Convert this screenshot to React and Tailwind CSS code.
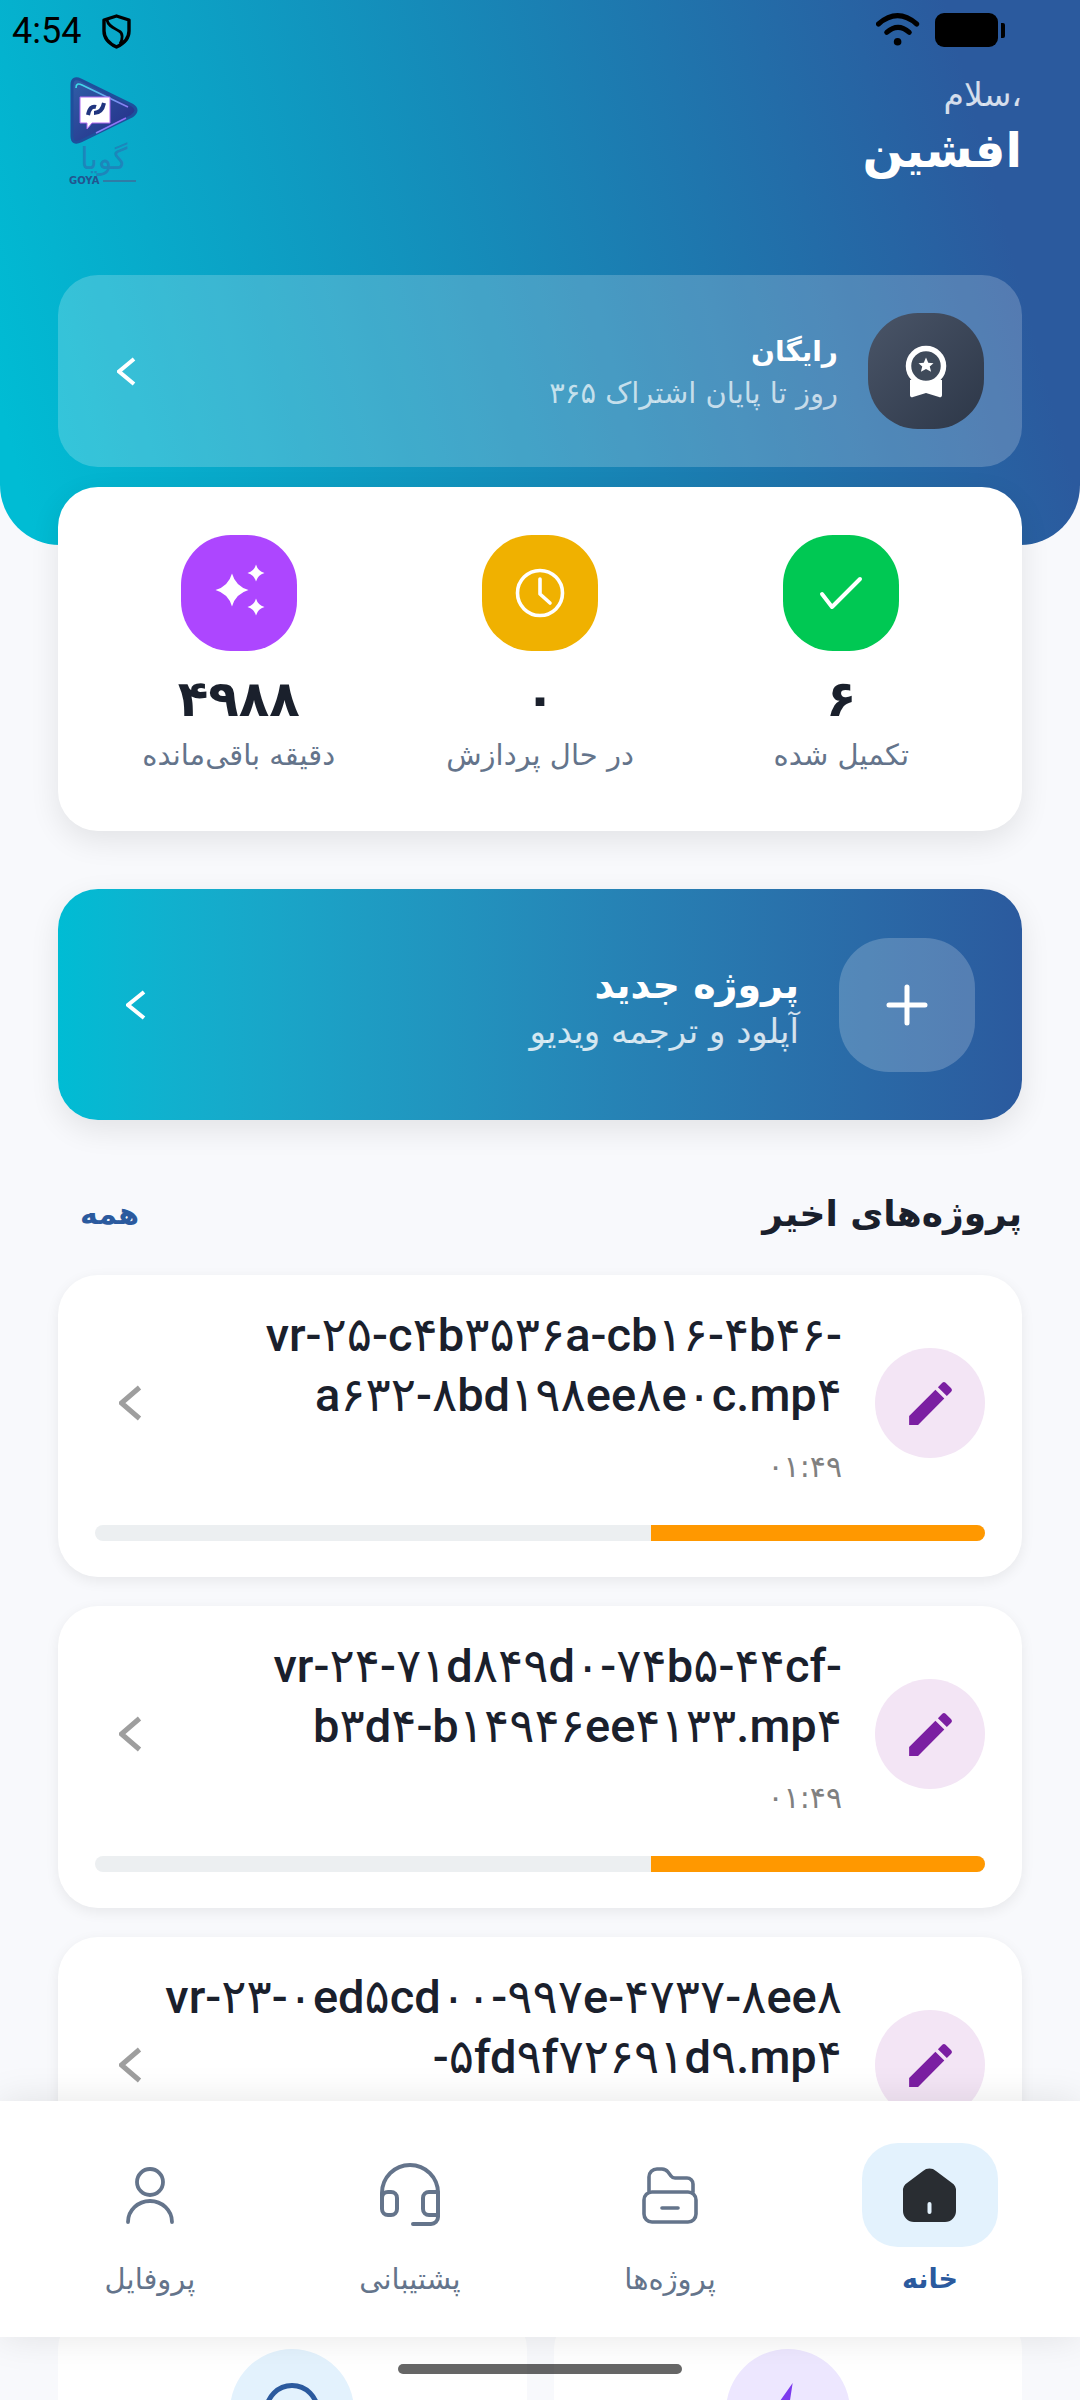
import React from 'react';
import { MdEdit } from 'react-icons/md';

const projects = [
  { lines: ['vr-۲۵-c۴b۳۵۳۶a-cb۱۶-۴b۴۶-', 'a۶۳۲-۸bd۱۹۸ee۸e۰c.mp۴'] },
  { lines: ['vr-۲۴-۷۱d۸۴۹d۰-۷۴b۵-۴۴cf-', 'b۳d۴-b۱۴۹۴۶ee۴۱۳۳.mp۴'] },
  { lines: ['vr-۲۳-۰ed۵cd۰۰-۹۹۷e-۴۷۳۷-۸ee۸', '-۵fd۹f۷۲۶۹۱d۹.mp۴'] },
];

function Chevron({ w, h, stroke, color }) {
  return (
    <svg width={w} height={h} viewBox={`0 0 ${w} ${h}`} fill="none" className="shrink-0">
      <path d={`M${w - stroke / 2} ${stroke / 2} L${stroke / 2} ${h / 2} L${w - stroke / 2} ${h - stroke / 2}`} stroke={color} strokeWidth={stroke} />
    </svg>
  );
}

function star(cx, cy, r) {
  const k = r * 0.22;
  return `M${cx} ${cy - r} Q${cx + k} ${cy - k} ${cx + r} ${cy} Q${cx + k} ${cy + k} ${cx} ${cy + r} Q${cx - k} ${cy + k} ${cx - r} ${cy} Q${cx - k} ${cy - k} ${cx} ${cy - r}Z`;
}

function Logo() {
  return (
    <div dir="ltr">
      <svg width="76" height="114" viewBox="0 0 76 114">
        <defs>
          <linearGradient id="logoBody" x1="0" y1="0" x2="1" y2="1">
            <stop offset="0" stopColor="#2f5fa8" />
            <stop offset="1" stopColor="#252a86" />
          </linearGradient>
          <linearGradient id="logoEdge" x1="0" y1="0" x2="1" y2="1">
            <stop offset="0" stopColor="#38e0e8" />
            <stop offset="1" stopColor="#a855f7" />
          </linearGradient>
        </defs>
        <path d="M6 10 Q6 1 15 5 L66 30 Q74 35 66 41 L15 66 Q6 70 6 61Z" fill="url(#logoBody)" stroke="#1e4f9c" strokeWidth="3" />
        <path d="M10 13 Q10 7 16 10 L62 32 M60 43 L30 58" fill="none" stroke="url(#logoEdge)" strokeWidth="1.6" />
        <path d="M14 22 H44 V48 H26 L21 54 V48 H14Z" fill="#ffffff" stroke="#b06bf0" strokeWidth="1" />
        <path d="M22 40 Q24 30 30 32 M38 28 Q36 38 28 38" fill="none" stroke="#20357f" strokeWidth="4" />
        <text x="38" y="94" textAnchor="middle" fontSize="30" fill="#1d86ba" fontFamily="DejaVu Sans">گویا</text>
        <text x="3" y="109" fontSize="10" fontWeight="700" fill="#22558f" fontFamily="DejaVu Sans">GOYA</text>
        <rect x="37" y="105" width="33" height="2" fill="#2f7ca6" />
      </svg>
    </div>
  );
}

function ProjectRow({ lines }) {
  return (
    <div className="bg-white rounded-[40px] shadow-[0_4px_14px_rgba(0,0,0,0.07)] px-[37px] pt-[30px] pb-[36px] mb-[29px] shrink-0">
      <div className="h-[196px] flex items-center">
        <div className="w-[110px] h-[110px] rounded-full bg-[#f3e5f5] flex items-center justify-center shrink-0">
          <MdEdit size={57} color="#7b1fa2" />
        </div>
        <div className="flex-1 h-full mr-[33px]">
          <div className="text-[47px] leading-[60px] font-medium text-[#1a202c] font-['Roboto','DejaVu_Sans',sans-serif]">
            {lines.map((l) => (
              <span key={l} dir="ltr" className="block text-right whitespace-nowrap">{l}</span>
            ))}
          </div>
          <div className="mt-[24px] text-[30px] leading-[36px] text-[#808080]">۰۱:۴۹</div>
        </div>
        <div className="ml-[24px] mr-[16px]">
          <Chevron w={23} h={36} stroke={5} color="#9e9e9e" />
        </div>
      </div>
      <div className="mt-[24px] h-[16px] rounded-full bg-[#eceff1] overflow-hidden">
        <div className="h-full bg-[#ff9800]" style={{ width: `${(334 / 890) * 100}%` }} />
      </div>
    </div>
  );
}

function NavItem({ label, active, children }) {
  return (
    <div className="flex-1 flex flex-col items-center">
      <div className={`w-[136px] h-[104px] rounded-[36px] flex items-center justify-center ${active ? 'bg-[#e3f2fd]' : ''}`}>
        {children}
      </div>
      <div className={`mt-[14px] leading-[36px] ${active ? 'text-[27px] font-bold text-[#2b5a9e]' : 'text-[29px] text-[#64748b]'}`}>{label}</div>
    </div>
  );
}

function App() {
  return (
    <div dir="rtl" className="relative w-[1080px] h-[2400px] overflow-hidden bg-[#f8f9fc] font-['DejaVu_Sans',sans-serif]">
      {/* هدر */}
      <header className="h-[545px] rounded-b-[60px] bg-linear-[75deg,#00bcd4_3%,#2b5a9e_89%] px-[58px]">
        <div dir="ltr" className="h-[60px] -mx-[58px] pl-[12px] flex items-center">
          <span className="text-[36px] text-black font-['Roboto',sans-serif] mt-[1px]">4:54</span>
          <svg width="29" height="35" viewBox="0 0 29 35" fill="none" className="ml-[21px] mt-[2px]">
            <path d="M14.5 2 L27 6 V17 C27 25 21 30 14.5 33 C8 30 2 25 2 17 V6Z" stroke="#000" strokeWidth="3.4" strokeLinejoin="round" />
            <path d="M5 6 C6 12 12 14 17 17 C21 19 21 25 18 30" stroke="#000" strokeWidth="2.8" />
          </svg>
          <div className="ml-auto mr-[75px] flex items-center">
            <svg width="44" height="34" viewBox="0 0 44 34" fill="none" className="mr-[15px]">
              <path d="M2.5 11 Q21.5 -5.6 40.7 11" stroke="#000" strokeWidth="5" strokeLinecap="round" />
              <path d="M10.7 19.3 Q22 9.3 33.3 19.3" stroke="#000" strokeWidth="5" strokeLinecap="round" />
              <circle cx="21.6" cy="28.7" r="3.8" fill="#000" />
            </svg>
            <div className="w-[63px] h-[34px] rounded-[9px] bg-black" />
            <div className="w-[4px] h-[15px] ml-[3px] bg-black rounded-r-[2px]" />
          </div>
        </div>
        <div className="flex items-start justify-between mt-[15px] h-[200px]">
          <div className="text-white">
            <div className="text-[33px] leading-[40px] text-white/80">،سلام</div>
            <div className="text-[48px] leading-[64px] font-bold mt-[3px]">افشین</div>
          </div>
          <div className="ml-[8px]"><Logo /></div>
        </div>
        <div className="h-[192px] rounded-[40px] bg-white/20 flex items-center pr-[38px] pl-[59px]">
          <div className="w-[116px] h-[116px] rounded-[50px] bg-linear-to-br from-[#4a5568] to-[#2d3748] flex items-center justify-center shrink-0">
            <svg width="60" height="66" viewBox="0 0 60 66">
              <path d="M14 42 V57 a2 2 0 0 0 3 2 L30 55 L43 59 a2 2 0 0 0 3 -2 V42Z" fill="#fff" />
              <circle cx="30" cy="28" r="17.5" fill="#3f4a5a" stroke="#fff" strokeWidth="5.5" />
              <path d="M30 16 L33 23 L40 23.5 L35 28 L36.8 35 L30 31.2 L23.2 35 L25 28 L20 23.5 L27 23Z" fill="#fff" transform="translate(7.5 7.5) scale(.75)" />
            </svg>
          </div>
          <div className="flex-1 mr-[30px]">
            <div className="text-[28px] leading-[42px] font-bold text-white">رایگان</div>
            <div className="text-[29px] leading-[36px] text-white/70 mt-[2px]">روز تا پایان اشتراک ۳۶۵</div>
          </div>
          <Chevron w={19} h={29} stroke={4} color="#ffffff" />
        </div>
      </header>

      <main className="px-[58px]">
        {/* آمار */}
        <div className="relative -mt-[58px] h-[344px] bg-white rounded-[40px] shadow-[0_10px_30px_rgba(0,0,0,0.09)] px-[30px] pt-[48px] grid grid-cols-3">
          <div className="flex flex-col items-center">
            <div className="w-[116px] h-[116px] rounded-[50px] bg-[#00c853] flex items-center justify-center">
              <svg width="46" height="38" viewBox="0 0 46 38" fill="none">
                <path d="M4 20 L14 33 L42 5" stroke="#fff" strokeWidth="4" strokeLinecap="round" strokeLinejoin="round" />
              </svg>
            </div>
            <div className="mt-[18px] text-[50px] leading-[60px] font-bold text-[#1a202c]">۶</div>
            <div className="mt-[8px] text-[29px] leading-[36px] text-[#64748b]">تکمیل شده</div>
          </div>
          <div className="flex flex-col items-center">
            <div className="w-[116px] h-[116px] rounded-[50px] bg-[#f0b100] flex items-center justify-center">
              <svg width="52" height="52" viewBox="0 0 52 52" fill="none" stroke="#fff" strokeWidth="3.6" strokeLinecap="round" strokeLinejoin="round">
                <circle cx="26" cy="26" r="22.5" />
                <path d="M26 12 V27 L36 36" />
              </svg>
            </div>
            <div className="mt-[18px] text-[50px] leading-[60px] font-bold text-[#1a202c]">۰</div>
            <div className="mt-[8px] text-[29px] leading-[36px] text-[#64748b]">در حال پردازش</div>
          </div>
          <div className="flex flex-col items-center">
            <div className="w-[116px] h-[116px] rounded-[50px] bg-[#ad46ff] flex items-center justify-center">
              <svg width="60" height="60" viewBox="0 0 60 60" fill="#fff">
                <path d={star(23, 27, 16.5)} />
                <path d={star(47, 10, 8.5)} />
                <path d={star(47, 44, 8.5)} />
              </svg>
            </div>
            <div className="mt-[18px] text-[50px] leading-[60px] font-bold text-[#1a202c]">۴۹۸۸</div>
            <div className="mt-[8px] text-[29px] leading-[36px] text-[#64748b]">دقیقه باقی‌مانده</div>
          </div>
        </div>

        {/* پروژه جدید */}
        <div className="mt-[58px] h-[231px] rounded-[40px] bg-linear-to-l from-[#2b5a9e] to-[#00bcd4] shadow-[0_10px_30px_rgba(0,0,0,0.09)] flex items-center pr-[47px] pl-[68px]">
          <div className="w-[136px] h-[134px] rounded-[50px] bg-white/20 flex items-center justify-center shrink-0">
            <svg width="42" height="42" viewBox="0 0 42 42" stroke="#fff" strokeWidth="5" strokeLinecap="round">
              <path d="M21 3 V39 M3 21 H39" />
            </svg>
          </div>
          <div className="flex-1 mr-[40px]">
            <div className="text-[38px] leading-[52px] font-bold text-white">پروژه جدید</div>
            <div className="text-[34px] leading-[40px] text-white/80">آپلود و ترجمه ویدیو</div>
          </div>
          <Chevron w={20} h={30} stroke={4} color="#ffffff" />
        </div>

        {/* پروژه‌های اخیر */}
        <div className="mt-[62px] h-[64px] flex items-center justify-between">
          <div className="text-[36px] leading-[48px] font-bold text-[#1a202c]">پروژه‌های اخیر</div>
          <div className="ml-[22px] text-[30px] leading-[36px] font-bold text-[#2b5a9e]">همه</div>
        </div>
        <div className="mt-[29px]">
          {projects.map((p) => (
            <ProjectRow key={p.lines[0]} lines={p.lines} />
          ))}
        </div>

        {/* کارت‌های پایین */}
        <div className="grid grid-cols-2 gap-[27px] mt-[70px]">
          <div className="h-[240px] bg-white rounded-[40px] flex justify-center pt-[40px]">
            <div className="w-[124px] h-[124px] rounded-full bg-[#ede7ff] flex items-center justify-center">
              <svg width="50" height="56" viewBox="0 0 50 60" fill="#7c3aed">
                <path d="M30 0 L6 34 H24 L20 60 L44 26 H26Z" />
              </svg>
            </div>
          </div>
          <div className="h-[240px] bg-white rounded-[40px] flex justify-center pt-[40px]">
            <div className="w-[124px] h-[124px] rounded-full bg-[#e3f2fd] flex items-center justify-center">
              <div className="w-[56px] h-[56px] rounded-full border-[5px] border-[#2b5a9e]" />
            </div>
          </div>
        </div>
      </main>

      {/* ناوبری پایین */}
      <nav className="absolute left-0 right-0 bottom-[63px] h-[236px] bg-white shadow-[0_0_36px_rgba(0,0,0,0.1)] px-[20px] pt-[42px] flex">
        <NavItem label="خانه" active>
          <svg width="60" height="60" viewBox="0 0 60 60">
            <path d="M23 6 a10 10 0 0 1 13 0 L52 18 a9 9 0 0 1 4 8 V46 a11 11 0 0 1 -11 11 H14 a11 11 0 0 1 -11 -11 V26 a9 9 0 0 1 4 -8Z" fill="#292d32" />
            <path d="M29.5 39 V47" stroke="#e3f2fd" strokeWidth="4" strokeLinecap="round" />
          </svg>
        </NavItem>
        <NavItem label="پروژه‌ها">
          <svg width="60" height="60" viewBox="0 0 60 60" fill="none" stroke="#64748b" strokeWidth="3.6" strokeLinecap="round" strokeLinejoin="round">
            <path d="M9 26 V12 a8 8 0 0 1 8 -8 h5 a8 8 0 0 1 6 3 l3 4 a5 5 0 0 0 4 2 h12 a6 6 0 0 1 6 6 v8" />
            <rect x="4" y="27" width="52" height="30" rx="8" />
            <path d="M22 43 H38" />
          </svg>
        </NavItem>
        <NavItem label="پشتیبانی">
          <svg width="60" height="64" viewBox="0 0 60 64" fill="none" stroke="#64748b" strokeWidth="4" strokeLinecap="round" strokeLinejoin="round">
            <path d="M2 42 V30 A28 28 0 0 1 58 30 V54 a7 7 0 0 1 -7 7 H33" />
            <rect x="2" y="29" width="15" height="23" rx="6" />
            <path d="M58 29 H49 a6 6 0 0 0 -6 6 v11 a6 6 0 0 0 6 6 h9" />
          </svg>
        </NavItem>
        <NavItem label="پروفایل">
          <svg width="60" height="60" viewBox="0 0 60 60" fill="none" stroke="#64748b" strokeWidth="3.8" strokeLinecap="round">
            <circle cx="30" cy="17" r="13" />
            <path d="M8 57 A22 21 0 0 1 52 57" />
          </svg>
        </NavItem>
      </nav>

      {/* نوار پایین سیستم */}
      <div className="absolute left-[398px] top-[2364px] w-[284px] h-[10px] rounded-full bg-black/60" />
    </div>
  );
}

export default App;
